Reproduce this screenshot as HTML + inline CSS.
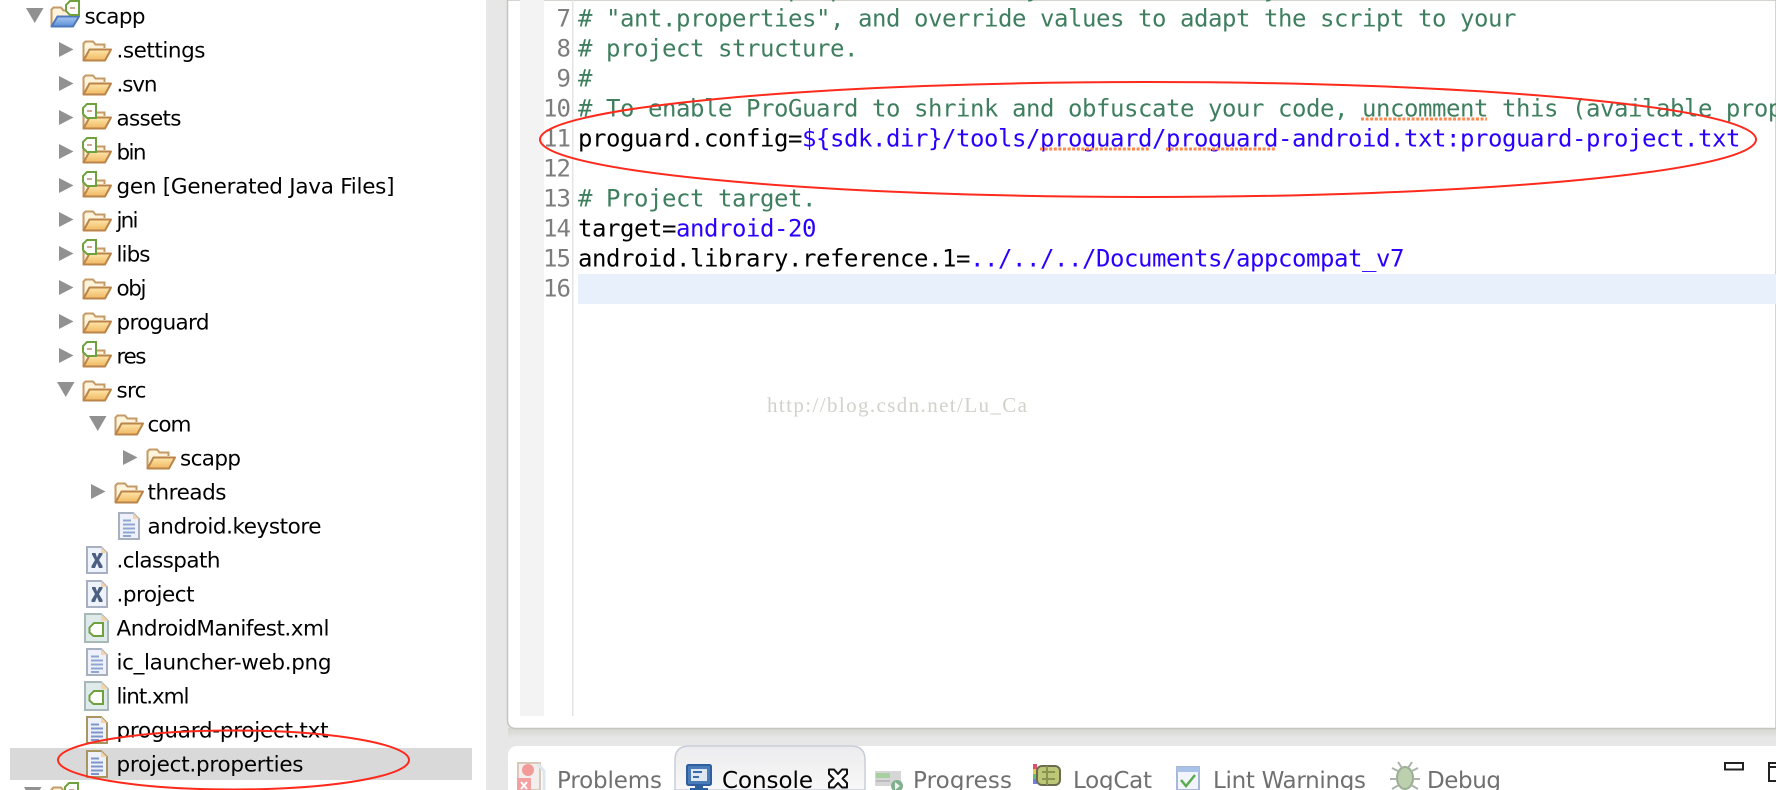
<!DOCTYPE html>
<html lang="en"><head><meta charset="utf-8"><title>scapp</title>
<style>
html,body{margin:0;padding:0;background:#fff;width:1776px;height:790px;overflow:hidden}
svg{display:block;filter:blur(.3px)}
.t{font-family:"DejaVu Sans","Liberation Sans",sans-serif;font-size:21.5px;fill:#000;transform:translate(-.5px,-.5px)}
.c{font-family:"DejaVu Sans Mono","Liberation Mono",monospace;font-size:24px;letter-spacing:-.45px;transform:translateY(-.5px)}
.g{fill:#3f7f5f}.k{fill:#000}.v{fill:#2a00ff}
.n{font-family:"DejaVu Sans Mono","Liberation Mono",monospace;font-size:24px;fill:#7d7d7d;text-anchor:end;transform:translateY(-.5px)}
.b{font-family:"DejaVu Sans","Liberation Sans",sans-serif;font-size:23px;fill:#707070}
</style></head><body>
<svg width="1776" height="790" viewBox="0 0 1776 790" xmlns="http://www.w3.org/2000/svg">
<defs>
<linearGradient id="fr" x1="0" y1="0" x2="0" y2="1"><stop offset="0" stop-color="#ffe6ac"/><stop offset="1" stop-color="#efb860"/></linearGradient>
<linearGradient id="frb" x1="0" y1="0" x2="0" y2="1"><stop offset="0" stop-color="#a9c8f0"/><stop offset="1" stop-color="#5b8fd8"/></linearGradient>
<linearGradient id="sh" x1="0" y1="0" x2="0" y2="1"><stop offset="0" stop-color="#d4d4d0"/><stop offset="1" stop-color="#e7e7e7"/></linearGradient>
<linearGradient id="tab" x1="0" y1="0" x2="0" y2="1"><stop offset="0" stop-color="#ececee"/><stop offset="1" stop-color="#f8f8f8"/></linearGradient>
<g id="fold">
<path d="M1.500 20.500V3.500L3.500 1.500H11L13.500 4.500H22.500V8" fill="#fff3dc" stroke="#c49a66" stroke-width="2"/>
<path d="M1.500 20.500L7.500 9.500H29L23 20.500Z" fill="url(#fr)" stroke="#bb8448" stroke-width="2" stroke-linejoin="round"/>
</g>
<g id="badge">
<path d="M14 1H5L1 5V11L5 15H14Z" fill="#fff" stroke="#6fa13f" stroke-width="2"/>
<path d="M5 8H10" stroke="#c08a70" stroke-width="1.500"/>
</g>
<g id="page">
<path d="M1 1H15L21 7V27H1Z" fill="#eef1fa" stroke="#a8afc0" stroke-width="2"/>
<path d="M15 1V7H21Z" fill="#f5d2a8"/>
<path d="M5 8.500H13M5 12.500H17M5 16.500H17M5 20.500H17M5 24H13" stroke="#8fa6d2" stroke-width="2"/>
</g>
<g id="pageT">
<path d="M1 1H15L21 7V27H1Z" fill="#eef1fa" stroke="#a8955f" stroke-width="2"/>
<path d="M15 1V7H21Z" fill="#f5d2a8"/>
<path d="M5 8.500H13M5 12.500H17M5 16.500H17M5 20.500H17M5 24H13" stroke="#7d95c8" stroke-width="2"/>
</g>
<g id="xf">
<path d="M1 1H15L21 7V27H1Z" fill="#eef2fb" stroke="#a8afc0" stroke-width="2"/>
<path d="M15 1V7H21Z" fill="#f5d2a8"/>
<path d="M6 7H9.500L11 11.500L13 7H16.500V8.500L13 14L16.500 20V22H13L11 17L9 22H5.500V20L9 14L6 8.500Z" fill="#4d5f80"/>
</g>
<g id="mf">
<path d="M1 1H17L24 8V29H1Z" fill="#dfeaea" stroke="#a8b8b8" stroke-width="2"/>
<path d="M17 1V8H24Z" fill="#f5d2a8"/>
<path d="M19 10H10L5.500 14.500V19.500L9.500 23H19Z" fill="#fff" stroke="#6fa13f" stroke-width="2"/>
</g>
<path id="ar" d="M0 0L14.500 7.500L0 15Z" fill="#919191"/>
<path id="ad" d="M0 0H17.500L8.750 15Z" fill="#919191"/>
</defs>

<!-- window chrome -->
<rect x="486" y="0" width="1290" height="790" fill="#e7e7e7"/>
<rect x="0" y="0" width="486" height="790" fill="#fff"/>
<rect x="10" y="748" width="462" height="32" fill="#d9d9d9"/>

<!-- editor card -->
<rect x="508" y="728" width="1268" height="10" fill="url(#sh)"/>
<path d="M507.500 0V720Q507.500 728.500 516 728.500H1776V0Z" fill="#fff" stroke="#c6c6bf" stroke-width="1.500"/>
<rect x="520" y="0" width="24" height="716" fill="#f3f3f3"/>
<rect x="572" y="0" width="1.500" height="716" fill="#e4e4e4"/>
<rect x="578" y="274" width="1198" height="30" fill="#e7f0fb"/>

<!-- line numbers -->
<text class="n" x="571" y="27">7</text><text class="n" x="571" y="57">8</text><text class="n" x="571" y="87">9</text>
<text class="n" x="571" y="117" textLength="28">10</text><text class="n" x="571" y="147" textLength="28">11</text><text class="n" x="571" y="177" textLength="28">12</text>
<text class="n" x="571" y="207" textLength="28">13</text><text class="n" x="571" y="237" textLength="28">14</text><text class="n" x="571" y="267" textLength="28">15</text><text class="n" x="571" y="297" textLength="28">16</text>

<!-- code -->
<text class="c g" x="578" y="-3"># To customize properties used by the Ant build system edit</text>
<text class="c g" x="578" y="27" xml:space="preserve"># "ant.properties", and override values to adapt the script to your</text>
<text class="c g" x="578" y="57"># project structure.</text>
<text class="c g" x="578" y="87">#</text>
<text class="c g" x="578" y="117"># To enable ProGuard to shrink and obfuscate your code, uncomment this (available properties: sdk.dir, user.home):</text>
<text class="c" x="578" y="147"><tspan class="k">proguard.config=</tspan><tspan class="v">${sdk.dir}/tools/proguard/proguard-android.txt:proguard-project.txt</tspan></text>
<text class="c g" x="578" y="207"># Project target.</text>
<text class="c" x="578" y="237"><tspan class="k">target=</tspan><tspan class="v">android-20</tspan></text>
<text class="c" x="578" y="267"><tspan class="k">android.library.reference.1=</tspan><tspan class="v">../../../Documents/appcompat_v7</tspan></text>

<!-- spelling squiggles -->
<g stroke="#ff8a50" stroke-width="3" stroke-dasharray="3 1.600" fill="none">
<path d="M1040 149H1150"/><path d="M1166 149H1276"/><path d="M1361 119H1487"/>
</g>

<!-- watermark -->
<text x="767" y="412" font-family="'Liberation Serif',serif" font-size="21" fill="#d2d1ca" textLength="260">http://blog.csdn.net/Lu_Ca</text>

<!-- tree: arrows -->
<use href="#ad" x="26" y="8"/>
<use href="#ar" x="59" y="42"/><use href="#ar" x="59" y="76"/><use href="#ar" x="59" y="110"/><use href="#ar" x="59" y="144"/>
<use href="#ar" x="59" y="178"/><use href="#ar" x="59" y="212"/><use href="#ar" x="59" y="246"/><use href="#ar" x="59" y="280"/>
<use href="#ar" x="59" y="314"/><use href="#ar" x="59" y="348"/>
<use href="#ad" x="57" y="382"/><use href="#ad" x="89" y="416"/>
<use href="#ar" x="123" y="450"/><use href="#ar" x="91" y="484"/>
<use href="#ad" x="24" y="787"/>

<!-- tree: folders -->
<g>
<path d="M51.500 26V9.500L53.500 7.500H61L63.500 10.500H72.500V14" fill="#fff3dc" stroke="#c49a66" stroke-width="2"/>
<path d="M51.500 26.500L57.500 16.500H79L73 26.500Z" fill="url(#frb)" stroke="#4d78bb" stroke-width="2" stroke-linejoin="round"/>
<use href="#badge" x="65" y="0"/>
</g>
<use href="#fold" x="82" y="40"/><use href="#fold" x="82" y="74"/>
<use href="#fold" x="82" y="108"/><use href="#badge" x="82" y="103"/>
<use href="#fold" x="82" y="142"/><use href="#badge" x="82" y="137"/>
<use href="#fold" x="82" y="176"/><use href="#badge" x="82" y="171"/>
<use href="#fold" x="82" y="210"/>
<use href="#fold" x="82" y="244"/><use href="#badge" x="82" y="239"/>
<use href="#fold" x="82" y="278"/>
<use href="#fold" x="82" y="312"/>
<use href="#fold" x="82" y="346"/><use href="#badge" x="82" y="341"/>
<use href="#fold" x="82" y="380"/>
<use href="#fold" x="114" y="414"/>
<use href="#fold" x="146" y="448"/>
<use href="#fold" x="114" y="482"/>
<use href="#page" x="118" y="512"/>
<use href="#xf" x="86" y="546"/><use href="#xf" x="86" y="580"/>
<use href="#mf" x="84" y="613"/>
<use href="#page" x="86" y="648"/>
<use href="#mf" x="84" y="681"/>
<use href="#pageT" x="86" y="716"/>
<use href="#pageT" x="86" y="750"/>
<use href="#fold" x="50" y="786"/><use href="#badge" x="64" y="782"/>

<!-- tree: labels -->
<text class="t" x="85" y="24" textLength="61">scapp</text>
<text class="t" x="117" y="58" textLength="89">.settings</text>
<text class="t" x="117" y="92" textLength="41">.svn</text>
<text class="t" x="117" y="126" textLength="65">assets</text>
<text class="t" x="117" y="160" textLength="30">bin</text>
<text class="t" x="117" y="194" textLength="278">gen [Generated Java Files]</text>
<text class="t" x="117" y="228" textLength="22">jni</text>
<text class="t" x="117" y="262" textLength="34">libs</text>
<text class="t" x="117" y="296" textLength="30">obj</text>
<text class="t" x="117" y="330" textLength="93">proguard</text>
<text class="t" x="117" y="364" textLength="30">res</text>
<text class="t" x="117" y="398" textLength="30">src</text>
<text class="t" x="148" y="432" textLength="44">com</text>
<text class="t" x="180.500" y="466" textLength="61">scapp</text>
<text class="t" x="148" y="500" textLength="79">threads</text>
<text class="t" x="148" y="534" textLength="174">android.keystore</text>
<text class="t" x="117" y="568" textLength="104">.classpath</text>
<text class="t" x="117" y="602" textLength="78">.project</text>
<text class="t" x="117" y="636" textLength="213">AndroidManifest.xml</text>
<text class="t" x="117" y="670" textLength="215">ic_launcher-web.png</text>
<text class="t" x="117" y="704" textLength="73">lint.xml</text>
<text class="t" x="117" y="738" textLength="212">proguard-project.txt</text>
<text class="t" x="117" y="772" textLength="187">project.properties</text>
<text class="t" x="85" y="807" textLength="80">Settlte</text>

<!-- bottom panel -->
<path d="M508 790V756Q508 746 518 746H1776V790Z" fill="#fff"/>
<path d="M675 790V760Q675 746 689 746H851Q865 746 865 760V790Z" fill="url(#tab)" stroke="#c9cdd9" stroke-width="1.500"/>

<!-- problems icon -->
<g>
<rect x="518" y="763" width="22" height="27" fill="#f3eeee" stroke="#d9c8b8" stroke-width="2"/>
<circle cx="528" cy="770" r="6" fill="#f29a9a"/>
<rect x="517" y="778" width="14" height="12" fill="#f2a0a0"/>
<path d="M521 782L527 789M527 782L521 789" stroke="#fff" stroke-width="2"/>
<path d="M538 764L544 771V790" stroke="#dfe6ee" stroke-width="3" fill="none"/>
</g>
<text class="b" x="557" y="788" textLength="105">Problems</text>

<!-- console icon -->
<g>
<rect x="687" y="765" width="24" height="20" rx="1.500" fill="#4a7cb8" stroke="#2f5f9e" stroke-width="2"/>
<rect x="691" y="769" width="16" height="12" fill="#dfe7f2"/>
<path d="M693 772H702M693 777H699" stroke="#3a6aa8" stroke-width="2"/>
<path d="M695 785H703V788H708V790H690V788H695Z" fill="#2f5f9e"/>
</g>
<text class="b" style="fill:#000" x="722" y="788" textLength="91">Console</text>
<path d="M829 769.500L834 769.500L838 774L842 769.500L847 769.500L847 774L842.500 778.500L847 783L847 787.500L842 787.500L838 783L834 787.500L829 787.500L829 783L833.500 778.500L829 774Z" fill="#fff" stroke="#111" stroke-width="2" stroke-linejoin="round"/>

<!-- progress icon -->
<g>
<rect x="875" y="771" width="26" height="15" fill="#d6d6d6"/>
<rect x="876" y="773" width="14" height="5" fill="#a8cfa0"/>
<rect x="876" y="780" width="14" height="2" fill="#bcbcbc"/>
<circle cx="897" cy="786" r="6" fill="#7fb08f"/>
<path d="M895 782L900 786L895 790Z" fill="#eaf5ec"/>
</g>
<text class="b" x="913" y="788" textLength="99">Progress</text>

<!-- logcat icon -->
<g>
<rect x="1033" y="764" width="4" height="5" fill="#e0506a"/><rect x="1033" y="769" width="4" height="5" fill="#e8c84a"/><rect x="1033" y="774" width="4" height="5" fill="#60c070"/><rect x="1033" y="779" width="4" height="5" fill="#7080e0"/>
<rect x="1037" y="766" width="23" height="19" rx="5" fill="#bcc878" stroke="#6b6b50" stroke-width="2"/>
<path d="M1042 772H1055M1042 779H1055M1047 766V785" stroke="#8a9450" stroke-width="2"/>
</g>
<text class="b" x="1073" y="788" textLength="79">LogCat</text>

<!-- lint icon -->
<g>
<rect x="1177" y="767" width="22" height="23" fill="#f2f5fb" stroke="#a9b8d8" stroke-width="2"/>
<rect x="1177" y="767" width="22" height="5" fill="#a9c2e8"/>
<path d="M1181 780L1186 786L1195 775" stroke="#5bab50" stroke-width="2.500" fill="none"/>
</g>
<text class="b" x="1213" y="788" textLength="153">Lint Warnings</text>

<!-- debug icon -->
<g>
<ellipse cx="1405" cy="778" rx="8" ry="11" fill="#bcd0ae" stroke="#9aae92" stroke-width="2"/>
<path d="M1392 768L1400 772M1418 768L1410 772M1390 779H1397M1420 779H1413M1392 789L1399 785M1418 789L1411 785M1398 762L1402 768M1412 762L1408 768" stroke="#a8b4a8" stroke-width="2"/>
</g>
<text class="b" x="1427" y="788" textLength="74">Debug</text>

<!-- view controls -->
<rect x="1725" y="763" width="18" height="6.500" fill="#fff" stroke="#222" stroke-width="2"/>
<path d="M1777 763H1769V781H1777M1769 767H1777" fill="#fff" stroke="#222" stroke-width="2"/>

<!-- red annotation ellipses -->
<ellipse cx="1148" cy="139.500" rx="608" ry="57.500" fill="none" stroke="#ff2a1c" stroke-width="2"/>
<ellipse cx="233.500" cy="760" rx="175.500" ry="29.500" fill="none" stroke="#ff2a1c" stroke-width="2"/>
</svg>
</body></html>
